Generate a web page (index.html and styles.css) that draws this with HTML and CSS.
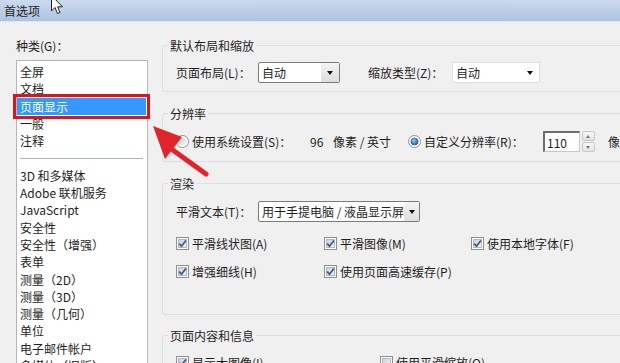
FILE: index.html
```html
<!DOCTYPE html>
<html lang="zh-CN">

<head>
  <meta charset="UTF-8">
  <meta name="viewport" content="width=device-width, initial-scale=1.0">
  <title>首选项</title>

  <link rel="stylesheet" href="styles.css">
</head>

<body>
  <svg class="defs" width="0" height="0">
    <defs>
      <linearGradient id="boxFill" x1="0" y1="0" x2="1" y2="1">
        <stop offset="0" stop-color="#c9d0d9" />
        <stop offset="1" stop-color="#f4f6f8" />
      </linearGradient>
      <radialGradient id="dotFill" cx="0.4" cy="0.35" r="0.7">
        <stop offset="0" stop-color="#9cc8f0" />
        <stop offset="1" stop-color="#1c54a0" />
      </radialGradient>
      <symbol id="cb-on" viewBox="0 0 13 13">
        <rect x=".5" y=".5" width="12" height="12" fill="#fff" stroke="#8e8f8f" />
        <rect x="2.5" y="2.5" width="8" height="8" fill="url(#boxFill)" stroke="#b2b8c0" />
        <path d="M3.2 6.6 L5.5 9.2 L9.9 3.4" fill="none" stroke="#3a5590" stroke-width="1.7" />
      </symbol>
      <symbol id="cb-off" viewBox="0 0 13 13">
        <rect x=".5" y=".5" width="12" height="12" fill="#fff" stroke="#8e8f8f" />
        <rect x="2.5" y="2.5" width="8" height="8" fill="url(#boxFill)" stroke="#b2b8c0" />
      </symbol>
      <symbol id="rb-off" viewBox="0 0 13 13">
        <circle cx="6.5" cy="6.5" r="6" fill="#fff" stroke="#8e8f8f" />
        <circle cx="6.5" cy="6.5" r="4" fill="url(#boxFill)" />
      </symbol>
      <symbol id="rb-on" viewBox="0 0 13 13">
        <circle cx="6.5" cy="6.5" r="6" fill="#fff" stroke="#8e8f8f" />
        <circle cx="6.5" cy="6.5" r="3.6" fill="url(#dotFill)" stroke="#27508a" stroke-width=".6" />
      </symbol>
    </defs>
  </svg>

  <div class="titlebar">
    <span>首选项</span>
    <svg class="cursor" width="13" height="20" viewBox="0 0 13 20">
      <polygon points="0.5,0.5 0.5,16 4,12.5 6.5,18.5 9,17.5 6.6,11.8 11.5,11.8" fill="#fff" stroke="#222" stroke-width="1" />
    </svg>
  </div>

  <div class="content">
    <aside class="sidebar">
      <div class="caption">种类(G)：</div>
      <ul class="listbox">
        <li>全屏</li>
        <li>文档</li>
        <li class="selected">页面显示</li>
        <li>一般</li>
        <li>注释</li>
        <li class="sep"><span></span></li>
        <li>3D 和多媒体</li>
        <li>Adobe 联机服务</li>
        <li>JavaScript</li>
        <li>安全性</li>
        <li>安全性（增强）</li>
        <li>表单</li>
        <li>测量（2D）</li>
        <li>测量（3D）</li>
        <li>测量（几何）</li>
        <li>单位</li>
        <li>电子邮件帐户</li>
        <li>多媒体（旧版）</li>
      </ul>
    </aside>

    <main class="panel">
      <fieldset class="group g-layout">
        <legend>默认布局和缩放</legend>
        <div class="row">
          <span class="field-label">页面布局(L)：</span>
          <div class="combo combo-dark w-layout"><span>自动</span><i class="combo-btn"><b class="caret"></b></i></div>
          <span class="field-label zoom-label">缩放类型(Z)：</span>
          <div class="combo w-zoom"><span>自动</span><i class="combo-btn"><b class="caret"></b></i></div>
        </div>
      </fieldset>

      <fieldset class="group g-res">
        <legend>分辨率</legend>
        <div class="row">
          <span class="opt opt-sys"><svg class="ctl"><use href="#rb-off" /></svg>使用系统设置(S)：</span>
          <span class="dpi">96</span>
          <span class="unit">像素 / 英寸</span>
          <span class="opt opt-custom"><svg class="ctl"><use href="#rb-on" /></svg>自定义分辨率(R)：</span>
          <div class="textbox">110</div>
          <div class="spin"><b class="spin-up"></b><b class="spin-down"></b></div>
          <span class="unit-cut">像素 / 英寸</span>
        </div>
      </fieldset>

      <fieldset class="group g-render">
        <legend>渲染</legend>
        <div class="row">
          <span class="field-label">平滑文本(T)：</span>
          <div class="combo combo-dark w-text"><span>用于手提电脑 / 液晶显示屏</span><i class="combo-btn"><b class="caret"></b></i></div>
        </div>
        <div class="checks">
          <span class="opt"><svg class="ctl"><use href="#cb-on" /></svg>平滑线状图(A)</span>
          <span class="opt"><svg class="ctl"><use href="#cb-on" /></svg>平滑图像(M)</span>
          <span class="opt"><svg class="ctl"><use href="#cb-on" /></svg>使用本地字体(F)</span>
          <span class="opt"><svg class="ctl"><use href="#cb-on" /></svg>增强细线(H)</span>
          <span class="opt"><svg class="ctl"><use href="#cb-on" /></svg>使用页面高速缓存(P)</span>
        </div>
      </fieldset>

      <fieldset class="group g-info">
        <legend>页面内容和信息</legend>
        <div class="info-row">
          <span class="opt"><svg class="ctl"><use href="#cb-on" /></svg>显示大图像(I)</span>
          <span class="opt"><svg class="ctl"><use href="#cb-off" /></svg>使用平滑缩放(O)</span>
        </div>
      </fieldset>
    </main>
  </div>

  <!-- red annotation arrow drawn over the dialog -->
  <svg class="annot" width="620" height="363" viewBox="0 0 620 363">
    <line x1="170" y1="148" x2="206" y2="174" stroke="#e1232a" stroke-width="5" stroke-linecap="round" />
    <polygon points="153,126 182,137 165,159" fill="#e1232a" />
  </svg>
</body>

</html>
```

FILE: styles.css
```css
* {
  margin: 0;
  padding: 0;
  box-sizing: border-box;
}

body {
  position: relative;
  width: 620px;
  height: 363px;
  overflow: hidden;
  background: #f0f0f0;
  color: #1e1e1e;
  font-family: "Noto Sans CJK SC", "Noto Sans", sans-serif;
  font-size: 12px;
  line-height: 17px;
}

.defs {
  position: absolute;
}

.annot {
  position: absolute;
  left: 0;
  top: 0;
  pointer-events: none;
}

.titlebar {
  position: relative;
  height: 22px;
  line-height: 21px;
  padding-left: 4px;
  background: linear-gradient(#cbdaee, #adc3e0);
  border-bottom: 1px solid #dde6f1;
}

.cursor {
  position: absolute;
  left: 51px;
  top: -5px;
}

.content {
  display: flex;
  padding: 15px 0 0 16px;
}

.sidebar {
  flex: none;
  width: 132px;
}

.caption {
  margin-bottom: 6px;
}

.listbox {
  list-style: none;
  height: 320px;
  padding-top: 2px;
  background: #fff;
  border: 1px solid #b4b6b9;
}

.listbox li {
  height: 17.3px;
  line-height: 17.3px;
  padding-left: 3px;
  margin-right: 1px;
  white-space: nowrap;
}

.listbox .selected {
  background: #3399ff;
  color: #fff;
  outline: 3px solid #d8161d;
  outline-offset: 1px;
}

.listbox .sep {
  display: flex;
  align-items: center;
}

.sep span {
  display: block;
  width: 123px;
  height: 1px;
  background: #a3b7c8;
}

.panel {
  flex: none;
  width: 480px;
  margin-left: 14px;
}

.group {
  border: 1px solid #d9dfe4;
  border-radius: 3px;
  padding: 8px 0 8px 13px;
}

.group legend {
  margin-left: -8px;
  padding: 0 2px;
  line-height: 17px;
}

.g-res {
  margin-top: 13px;
  padding: 9px 0 9px 13px;
}

.g-render {
  margin-top: 13px;
  padding: 9px 0 34px 13px;
}

.g-info {
  margin-top: 12px;
  padding: 10px 0 20px 13px;
}

.row {
  display: flex;
  align-items: center;
  height: 21px;
  white-space: nowrap;
}

.field-label {
  flex: none;
  width: 82px;
}

.zoom-label {
  width: 84px;
  margin-left: 28px;
}

.combo {
  flex: none;
  display: flex;
  align-items: center;
  height: 21px;
  padding-left: 3px;
  background: #fff;
  border: 1px solid #dedede;
  border-radius: 2px;
}

.combo-dark {
  border-color: #7b7b7b;
}

.combo-btn {
  display: flex;
  align-items: center;
  justify-content: center;
  width: 18px;
  height: 100%;
  margin-left: auto;
}

.combo-dark .combo-btn {
  background: linear-gradient(#f4f4f4, #dedede);
}

.caret {
  width: 0;
  height: 0;
  border-left: 3.5px solid transparent;
  border-right: 3.5px solid transparent;
  border-top: 4px solid #111;
}

.w-layout {
  width: 82px;
}

.w-zoom {
  width: 88px;
}

.w-text {
  width: 162px;
}

.opt {
  flex: none;
  display: inline-flex;
  align-items: center;
  gap: 3px;
  white-space: nowrap;
}

.ctl {
  flex: none;
  width: 13px;
  height: 13px;
}

.opt-sys {
  width: 134px;
}

.dpi {
  flex: none;
  width: 23px;
}

.unit {
  flex: none;
  width: 75px;
}

.opt-custom {
  width: 135px;
}

.textbox {
  flex: none;
  width: 37px;
  height: 21px;
  padding: 1px 0 0 2px;
  background: #fff;
  border: 1px solid #c8c8c8;
  border-top: 2px solid #6d6d6d;
  border-left: 2px solid #6d6d6d;
}

.spin {
  flex: none;
  display: flex;
  flex-direction: column;
  gap: 1px;
  width: 13px;
  height: 21px;
  margin-left: 2px;
}

.spin b {
  position: relative;
  flex: 1;
  background: linear-gradient(#f7f7f7, #e3e3e3);
  border: 1px solid #c9c9c9;
  border-radius: 2px;
}

.spin b::after {
  content: "";
  position: absolute;
  left: 3px;
  top: 3px;
  border-left: 2.5px solid transparent;
  border-right: 2.5px solid transparent;
}

.spin-up::after {
  border-bottom: 3px solid #777;
}

.spin-down::after {
  border-top: 3px solid #777;
}

.unit-cut {
  flex: none;
  margin-left: 13px;
}

.checks {
  display: grid;
  grid-template-columns: 148px 147px 147px;
  row-gap: 11px;
  margin-top: 13px;
}

.info-row {
  display: grid;
  grid-template-columns: 204px 200px;
}
```
